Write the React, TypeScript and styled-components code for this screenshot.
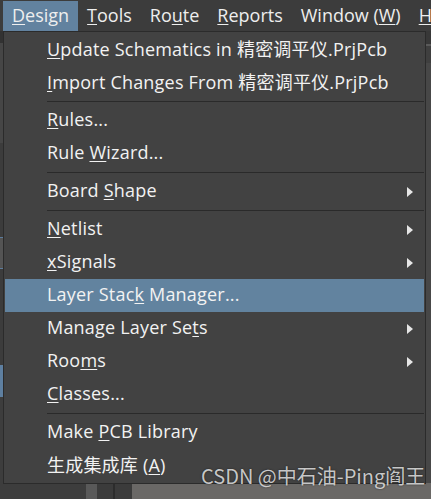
import React from "react";
import styled, { createGlobalStyle } from "styled-components";

const GlobalStyle = createGlobalStyle`
    html, body {
        margin: 0;
        padding: 0;
        background: #3a3a3a;
    }

    body {
        font-family: "Open Sans", "Noto Sans CJK SC", sans-serif;
        -webkit-font-smoothing: antialiased;
    }
`;

const Page = styled.div`
    position: relative;
    width: 431px;
    height: 499px;
    overflow: hidden;
    display: flex;
    flex-direction: column;
    background: #3a3a3a;
`;

const MenuBar = styled.div`
    height: 31px;
    box-sizing: border-box;
    padding: 1px 0 0 3px;
    display: flex;
    background: #3c3c3c;
    white-space: nowrap;
`;

const BarItem = styled.div<{ $active?: boolean }>`
    display: flex;
    align-items: center;
    padding: 0 9px 2px;
    font-size: 18px;
    color: #eeeeee;
    background: ${({ $active }) => ($active ? "#62829f" : "transparent")};
`;

const Key = styled.u`
    text-decoration: underline;
    text-decoration-thickness: 1px;
    text-underline-offset: 2px;
    text-decoration-skip-ink: none;
`;

const Workspace = styled.div`
    flex: 1;
    display: flex;
`;

const LeftPanel = styled.div`
    width: 86px;
    display: flex;
    flex-direction: column;
    background: #3c3c3c;
`;

const PanelBlock = styled.div<{ $h: number; $bg: string; $edge?: string }>`
    height: ${({ $h }) => $h}px;
    flex-shrink: 0;
    box-sizing: border-box;
    background: ${({ $bg }) => $bg};
    border-top: ${({ $edge }) => ($edge ? `1px solid ${$edge}` : "none")};
    border-bottom: ${({ $edge }) => ($edge ? `1px solid ${$edge}` : "none")};
`;

const ScrollTrack = styled.div`
    width: 11px;
    background: #595959;
`;

const Gutter = styled.div`
    width: 35px;
    display: flex;
    background: #3b3b3b;

    &::before {
        content: "";
        width: 2px;
        margin-left: 16px;
        background: #2c2c2c;
    }
`;

const Canvas = styled.div`
    flex: 1;
    display: flex;
    flex-direction: column;
`;

const TabBar = styled.div`
    height: 32px;
    display: flex;
    flex-direction: column;
    justify-content: flex-end;
    background: #383838;
`;

const Tab = styled.div`
    height: 19px;
    box-sizing: border-box;
    border-top: 2px solid #5a5a5a;
    background: #3f3f3f;
`;

const Sheet = styled.div`
    flex: 1;
    background: #474747;
`;

const Footer = styled.div`
    height: 16px;
    background: #6a6866;
`;

const Dropdown = styled.div`
    position: absolute;
    left: 3px;
    top: 31px;
    width: 423px;
    height: 453px;
    box-sizing: border-box;
    border: 1px solid #2b2b2b;
    padding: 1px 1px 0 1px;
    background: #424242;
    display: flex;
    flex-direction: column;
`;

const Row = styled.div<{ $active?: boolean }>`
    height: 33px;
    box-sizing: border-box;
    padding: 0 0 3px 42px;
    flex-shrink: 0;
    display: flex;
    align-items: center;
    font-size: 18px;
    letter-spacing: 0.2px;
    color: #f2f2f2;
    white-space: nowrap;
    background: ${({ $active }) => ($active ? "#62839f" : "transparent")};
`;

const Arrow = styled.span`
    margin: 3px 11px 0 auto;
    width: 0;
    height: 0;
    border-top: 5px solid transparent;
    border-bottom: 5px solid transparent;
    border-left: 6px solid #e6e6e6;
`;

const Separator = styled.div`
    height: 5px;
    flex-shrink: 0;
    display: flex;
    align-items: center;
    padding-left: 42px;

    &::after {
        content: "";
        flex: 1;
        height: 1px;
        background: #2a2a2a;
    }
`;

const Watermark = styled.div`
    position: absolute;
    left: 201px;
    top: 465px;
    font-family: "Noto Sans CJK SC", "Liberation Sans", sans-serif;
    font-size: 20px;
    line-height: 22px;
    color: rgba(222, 222, 222, 0.88);
    text-shadow: 0 0 2px rgba(0, 0, 0, 0.55);
    white-space: nowrap;
`;

type Item =
    | { sep: true }
    | { sep?: false; label: React.ReactNode; sub?: boolean; active?: boolean };

const items: Item[] = [
    { label: <><Key>U</Key>pdate Schematics in 精密调平仪.PrjPcb</> },
    { label: <><Key>I</Key>mport Changes From 精密调平仪.PrjPcb</> },
    { sep: true },
    { label: <><Key>R</Key>ules...</> },
    { label: <>Rule <Key>W</Key>izard...</> },
    { sep: true },
    { label: <>Board <Key>S</Key>hape</>, sub: true },
    { sep: true },
    { label: <><Key>N</Key>etlist</>, sub: true },
    { label: <><Key>x</Key>Signals</>, sub: true },
    { label: <>Layer Stac<Key>k</Key> Manager...</>, active: true },
    { label: <>Manage Layer Se<Key>t</Key>s</>, sub: true },
    { label: <>Roo<Key>m</Key>s</>, sub: true },
    { label: <><Key>C</Key>lasses...</> },
    { sep: true },
    { label: <>Make <Key>P</Key>CB Library</> },
    { label: <>生成集成库 (<Key>A</Key>)</> },
];

export default function App() {
    return (
        <Page>
            <GlobalStyle />
            <MenuBar>
                <BarItem $active><Key>D</Key>esign</BarItem>
                <BarItem><Key>T</Key>ools</BarItem>
                <BarItem>Ro<Key>u</Key>te</BarItem>
                <BarItem><Key>R</Key>eports</BarItem>
                <BarItem>Window (<Key>W</Key>)</BarItem>
                <BarItem><Key>H</Key>elp</BarItem>
            </MenuBar>
            <Workspace>
                <LeftPanel>
                    <PanelBlock $h={12} $bg="#323232" />
                    <PanelBlock $h={100} $bg="#464646" />
                    <PanelBlock $h={94} $bg="#3c3c3c" />
                    <PanelBlock $h={32} $bg="#545454" $edge="#5d7c9c" />
                    <PanelBlock $h={96} $bg="#3c3c3c" />
                    <PanelBlock $h={32} $bg="#5e7fa0" />
                    <PanelBlock $h={102} $bg="#3d3d3d" />
                </LeftPanel>
                <ScrollTrack />
                <Gutter />
                <Canvas>
                    <TabBar>
                        <Tab />
                    </TabBar>
                    <Sheet />
                    <Footer />
                </Canvas>
            </Workspace>
            <Dropdown>
                {items.map((it, i) =>
                    it.sep ? (
                        <Separator key={i} />
                    ) : (
                        <Row key={i} $active={it.active}>
                            <span>{it.label}</span>
                            {it.sub && <Arrow />}
                        </Row>
                    )
                )}
            </Dropdown>
            <Watermark>CSDN @中石油-Ping阎王</Watermark>
        </Page>
    );
}
